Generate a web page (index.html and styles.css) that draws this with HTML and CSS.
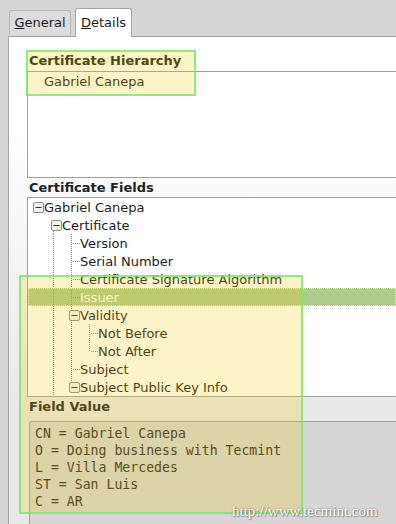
FILE: index.html
```html
<!DOCTYPE html>
<html lang="en">
<head>
    <meta charset="UTF-8">
    <title>Certificate Viewer</title>
    <link rel="stylesheet" href="styles.css">
</head>
<body>
    <div class="tabs">
        <div class="tab"><u>G</u>eneral</div>
        <div class="tab active"><u>D</u>etails</div>
    </div>

    <div class="panel">
        <div class="section-title">Certificate Hierarchy</div>
        <div class="tree-box hierarchy">
            <div class="row"><span class="slot"></span><span class="label">Gabriel Canepa</span></div>
        </div>

        <div class="section-title fields-title">Certificate Fields</div>
        <div class="tree-box fields">
            <div class="row">
                <span class="slot"><svg class="expander" width="11" height="11"><rect x="0.5" y="0.5" width="10" height="10" rx="1.5"/><line x1="2.5" y1="5.5" x2="8.5" y2="5.5"/></svg></span>
                <span class="label">Gabriel Canepa</span>
            </div>
            <div class="row">
                <span class="cell"></span>
                <span class="slot g-down"><svg class="expander" width="11" height="11"><rect x="0.5" y="0.5" width="10" height="10" rx="1.5"/><line x1="2.5" y1="5.5" x2="8.5" y2="5.5"/></svg></span>
                <span class="label">Certificate</span>
            </div>
            <div class="row">
                <span class="cell"></span><span class="cell g-v"></span>
                <span class="slot g-t"></span>
                <span class="label">Version</span>
            </div>
            <div class="row">
                <span class="cell"></span><span class="cell g-v"></span>
                <span class="slot g-t"></span>
                <span class="label">Serial Number</span>
            </div>
            <div class="row">
                <span class="cell"></span><span class="cell g-v"></span>
                <span class="slot g-t"></span>
                <span class="label">Certificate Signature Algorithm</span>
            </div>
            <div class="row selected">
                <span class="cell"></span><span class="cell g-v"></span>
                <span class="slot g-t"></span>
                <span class="label">Issuer</span>
            </div>
            <div class="row">
                <span class="cell"></span><span class="cell g-v"></span>
                <span class="slot g-v"><svg class="expander" width="11" height="11"><rect x="0.5" y="0.5" width="10" height="10" rx="1.5"/><line x1="2.5" y1="5.5" x2="8.5" y2="5.5"/></svg></span>
                <span class="label">Validity</span>
            </div>
            <div class="row">
                <span class="cell"></span><span class="cell g-v"></span><span class="cell g-v"></span>
                <span class="slot g-t"></span>
                <span class="label">Not Before</span>
            </div>
            <div class="row">
                <span class="cell"></span><span class="cell g-v"></span><span class="cell g-v"></span>
                <span class="slot g-l"></span>
                <span class="label">Not After</span>
            </div>
            <div class="row">
                <span class="cell"></span><span class="cell g-v"></span>
                <span class="slot g-t"></span>
                <span class="label">Subject</span>
            </div>
            <div class="row">
                <span class="cell"></span><span class="cell g-v"></span>
                <span class="slot g-up"><svg class="expander" width="11" height="11"><rect x="0.5" y="0.5" width="10" height="10" rx="1.5"/><line x1="2.5" y1="5.5" x2="8.5" y2="5.5"/></svg></span>
                <span class="label">Subject Public Key Info</span>
            </div>
        </div>

        <div class="section-title value-title">Field Value</div>
        <div class="value-box">
            <div>CN = Gabriel Canepa</div>
            <div>O = Doing business with Tecmint</div>
            <div>L = Villa Mercedes</div>
            <div>ST = San Luis</div>
            <div>C = AR</div>
        </div>
    </div>

    <!-- highlight marks drawn over the dialog -->
    <div class="mark mark-small"></div>
    <div class="mark mark-large"></div>

    <div class="watermark">http://www.tecmint.com</div>
</body>
</html>
```

FILE: styles.css
```css
* {
    margin: 0;
    padding: 0;
    box-sizing: border-box;
}

body {
    font-family: 'DejaVu Sans', 'Noto Sans', sans-serif;
    font-size: 13px;
    color: #1c1c1c;
    background: #d6d6d6;
    width: 396px;
    height: 524px;
    overflow: hidden;
    position: relative;
}

/* tabs */

.tabs {
    display: flex;
    align-items: flex-end;
    height: 36px;
    padding-left: 9px;
    gap: 3px;
}

.tab {
    width: 62px;
    height: 25px;
    margin-bottom: 1px;
    line-height: 23px;
    text-align: center;
    background: #dcdcdc;
    border: 1px solid #b4b4b4;
    border-bottom: none;
    border-radius: 3px 3px 0 0;
}

.tab.active {
    width: 57px;
    height: 29px;
    margin-left: 1px;
    margin-bottom: -1px;
    line-height: 27px;
    background: #fff;
    border-color: #a8a8a8;
    position: relative;
    z-index: 1;
}

/* page */

.panel {
    margin-left: 8px;
    width: 388px;
    height: 488px;
    overflow: hidden;
    border-left: 1px solid #a4a4a4;
    border-top: 1px solid #a4a4a4;
    background: linear-gradient(#fff 20%, #e8e8e8 76%);
    padding-top: 13px;
}

.section-title {
    font-weight: bold;
    line-height: 21px;
    padding-left: 20px;
    color: #222;
}

.fields-title {
    line-height: 19px;
}

.value-title {
    line-height: 18px;
    margin-top: 1px;
    margin-bottom: 5px;
}

.tree-box {
    margin-left: 18px;
    background: #fff;
    border: 1px solid #a0a0a0;
    border-right: none;
}

.hierarchy {
    height: 107px;
}

.fields {
    height: 200px;
}

.row {
    display: flex;
    align-items: center;
    height: 18px;
    padding-left: 5px;
    white-space: nowrap;
}

.row.selected {
    background: #aecb8b;
    color: #fff;
    outline: 1px dotted rgba(255, 255, 200, 0.8);
    outline-offset: -1px;
}

.cell {
    width: 18px;
    align-self: stretch;
    flex-shrink: 0;
}

.slot {
    width: 11px;
    align-self: stretch;
    flex-shrink: 0;
    display: flex;
    align-items: center;
}

/* dotted tree guides */

.g-v {
    background: repeating-linear-gradient(#8a8a8a 0 1px, transparent 1px 2px) 2px 0 / 1px 100% no-repeat;
}

.g-down {
    background: repeating-linear-gradient(#8a8a8a 0 1px, transparent 1px 2px) 2px 9px / 1px 9px no-repeat;
}

.g-up {
    background: repeating-linear-gradient(#8a8a8a 0 1px, transparent 1px 2px) 2px 0 / 1px 9px no-repeat;
}

.g-t {
    background:
        repeating-linear-gradient(#8a8a8a 0 1px, transparent 1px 2px) 2px 0 / 1px 100% no-repeat,
        repeating-linear-gradient(to right, #8a8a8a 0 1px, transparent 1px 2px) 4px 9px / 7px 1px no-repeat;
}

.g-l {
    background:
        repeating-linear-gradient(#8a8a8a 0 1px, transparent 1px 2px) 2px 0 / 1px 10px no-repeat,
        repeating-linear-gradient(to right, #8a8a8a 0 1px, transparent 1px 2px) 4px 9px / 7px 1px no-repeat;
}

.expander {
    display: block;
}

.expander rect {
    fill: #f4f4f4;
    stroke: #8c8c8c;
}

.expander line {
    stroke: #2a2a2a;
}

/* field value */

.value-box {
    margin-left: 20px;
    height: 104px;
    background: #d6d6d6;
    border: 1px solid #a2a2a2;
    border-right: none;
    border-bottom: none;
    border-radius: 3px 0 0 0;
    padding: 3px 5px;
    font-family: 'DejaVu Sans Mono', 'Liberation Mono', monospace;
    font-size: 13.2px;
    line-height: 17px;
    color: #2a2a2a;
    white-space: nowrap;
}

/* highlight marks */

.mark {
    position: absolute;
    background: rgba(246, 200, 5, 0.22);
    border: 2px solid rgba(110, 235, 110, 0.8);
}

.mark-small {
    left: 26px;
    top: 50px;
    width: 170px;
    height: 46px;
}

.mark-large {
    left: 19px;
    top: 275px;
    width: 284px;
    height: 239px;
}

.watermark {
    position: absolute;
    left: 232px;
    top: 503px;
    font-family: 'Liberation Serif', 'DejaVu Serif', serif;
    font-size: 15px;
    color: #fff;
    text-shadow: 0 0 2px rgba(0, 0, 0, 0.45), 1px 1px 1px rgba(0, 0, 0, 0.3);
}
```
